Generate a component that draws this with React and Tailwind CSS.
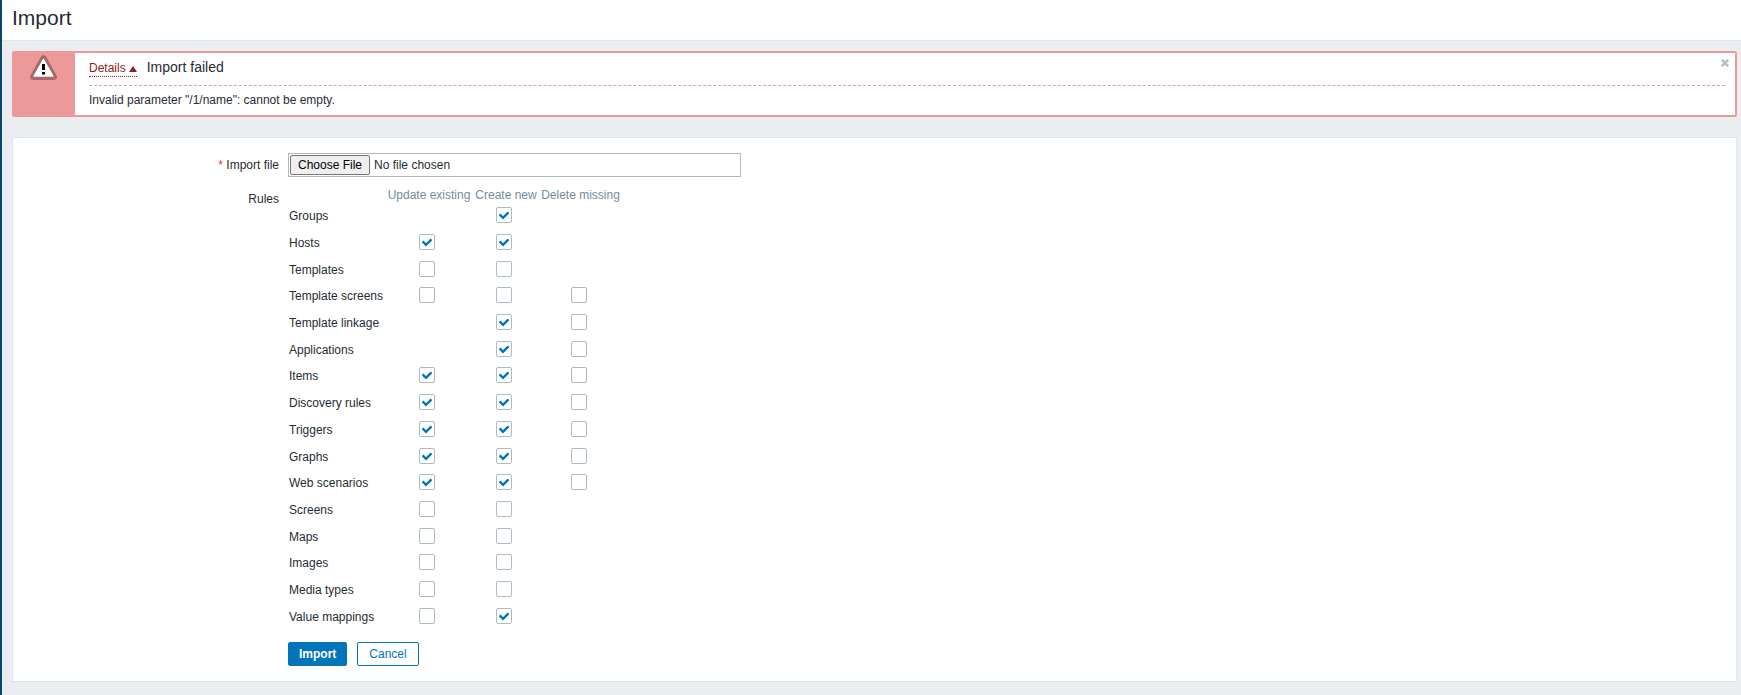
import { useState } from 'react';

const RULES = [
  { name: 'Groups', boxes: [null, true, null] },
  { name: 'Hosts', boxes: [true, true, null] },
  { name: 'Templates', boxes: [false, false, null] },
  { name: 'Template screens', boxes: [false, false, false] },
  { name: 'Template linkage', boxes: [null, true, false] },
  { name: 'Applications', boxes: [null, true, false] },
  { name: 'Items', boxes: [true, true, false] },
  { name: 'Discovery rules', boxes: [true, true, false] },
  { name: 'Triggers', boxes: [true, true, false] },
  { name: 'Graphs', boxes: [true, true, false] },
  { name: 'Web scenarios', boxes: [true, true, false] },
  { name: 'Screens', boxes: [false, false, null] },
  { name: 'Maps', boxes: [false, false, null] },
  { name: 'Images', boxes: [false, false, null] },
  { name: 'Media types', boxes: [false, false, null] },
  { name: 'Value mappings', boxes: [false, true, null] },
];

const COLUMNS = ['Update existing', 'Create new', 'Delete missing'];

function CheckBox({ label, defaultChecked }) {
  return (
    <span className="relative mr-1 mb-0.5 inline-block size-4 align-middle">
      <input
        type="checkbox"
        aria-label={label}
        defaultChecked={defaultChecked}
        className="peer block size-4 appearance-none rounded-xs border border-[#acbbc2] bg-white"
      />
      <svg viewBox="0 0 16 16" className="pointer-events-none absolute inset-0 hidden size-4 peer-checked:block">
        <path d="M3.6 7.4 L7 10.8 L12.5 5.3" fill="none" stroke="#0275b8" strokeWidth="2.4" />
      </svg>
    </span>
  );
}

function ErrorMessage({ onClose }) {
  const [open, setOpen] = useState(true);

  return (
    <div className="flex rounded-xs border-2 border-[#ee9999] bg-white">
      <div className="flex w-[61px] shrink-0 bg-[#ee9999] pt-0.5 pl-4">
        <svg viewBox="0 0 27 25" className="h-[25px] w-[27px]">
          <path d="M13.5 3.2 L24 22 H3 Z" fill="#a36b6b" stroke="#a36b6b" strokeWidth="6" strokeLinejoin="round" />
          <path d="M13.5 4.5 L22.8 21 H4.2 Z" fill="#fff" stroke="#fff" strokeWidth="1.5" strokeLinejoin="round" />
          <path d="M12 9 h3 v6 h-3 Z M12 17 h3 v2.5 h-3 Z" fill="#000" />
        </svg>
      </div>
      <div className="relative grow pt-1.5 pr-2.5 pb-[7px] pl-3.5">
        <div className="flex items-start border-b border-dashed border-[#ee9999] pb-2">
          <button
            type="button"
            onClick={() => setOpen(!open)}
            className="mt-px flex items-center gap-[3px] border-b border-dotted border-[#8f2020] leading-4 text-[#8f2020]"
          >
            Details
            <svg viewBox="0 0 8 6" className={open ? 'mt-0.5 h-1.5 w-2' : 'mt-0.5 h-1.5 w-2 rotate-180'}>
              <path d="M4 0 L8 6 H0 Z" fill="#8f2020" />
            </svg>
          </button>
          <span className="ml-2.5 text-sm leading-4">Import failed</span>
        </div>
        {open && <p className="pt-1.5 leading-4">Invalid parameter "/1/name": cannot be empty.</p>}
        <button type="button" aria-label="Close" onClick={onClose} className="absolute top-1.5 right-1.5">
          <svg viewBox="0 0 8 8" className="size-2">
            <path d="M0.8 0.8 L7.2 7.2 M7.2 0.8 L0.8 7.2" stroke="#b3c1c8" strokeWidth="2.6" />
          </svg>
        </button>
      </div>
    </div>
  );
}

export default function App() {
  const [showError, setShowError] = useState(true);

  return (
    <div className="min-h-screen border-l-2 border-[#0a466a] bg-[#ebeef0] font-['Liberation_Sans',Arial,sans-serif] text-xs text-[#1f2c33]">
      <header className="border-b border-[#dfe4e7] bg-white px-2.5 pt-1.5 pb-2.5">
        <h1 className="text-[21px] leading-6">Import</h1>
      </header>

      <main className="pt-2.5 pr-1 pb-3 pl-2.5">
        {showError && <ErrorMessage onClose={() => setShowError(false)} />}

        <form
          onSubmit={(e) => e.preventDefault()}
          className="mt-5 grid grid-cols-[266px_1fr] gap-x-[9px] border border-[#dfe4e7] bg-white py-[15px]"
        >
          <label htmlFor="import_file" className="text-right leading-6">
            <span className="text-[#e33734]">*</span> Import file
          </label>
          <input
            id="import_file"
            type="file"
            className="h-6 w-[453px] border border-[#acbbc2] p-px file:mr-1 file:h-5 file:rounded-xs file:border file:border-solid file:border-[#767676] file:bg-[#efefef] file:px-[7px] file:text-black"
          />

          <div className="pt-3.5 text-right leading-4">Rules</div>
          <table className="mt-2.5 h-[443px] w-[334px] table-fixed">
            <thead>
              <tr className="h-3.5 text-[#768d99]">
                <td className="w-[97px]"></td>
                <th className="w-[88px] font-normal whitespace-nowrap">Update existing</th>
                <th className="w-[66px] font-normal whitespace-nowrap">Create new</th>
                <th className="font-normal whitespace-nowrap">Delete missing</th>
              </tr>
            </thead>
            <tbody>
              {RULES.map((rule) => (
                <tr key={rule.name}>
                  <td className="pl-px leading-4">{rule.name}</td>
                  {rule.boxes.map((checked, i) => (
                    <td key={COLUMNS[i]} className="text-center leading-4">
                      {checked !== null && (
                        <CheckBox label={`${rule.name}: ${COLUMNS[i]}`} defaultChecked={checked} />
                      )}
                    </td>
                  ))}
                </tr>
              ))}
            </tbody>
          </table>

          <div className="col-start-2 mt-3 flex gap-2.5">
            <button type="submit" className="h-6 rounded-xs border border-[#0275b8] bg-[#0275b8] px-2.5 font-bold text-white">
              Import
            </button>
            <button type="button" className="h-6 rounded-xs border border-[#0275b8] bg-white px-[11px] text-[#0275b8]">
              Cancel
            </button>
          </div>
        </form>
      </main>
    </div>
  );
}
